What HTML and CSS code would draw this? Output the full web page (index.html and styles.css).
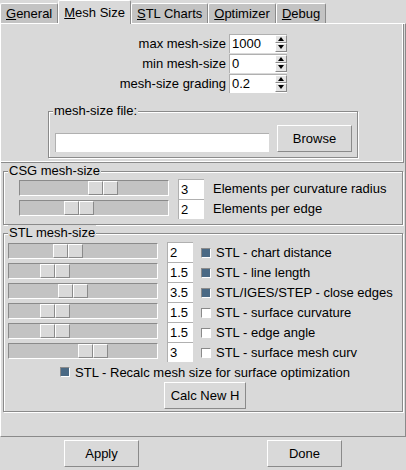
FILE: index.html
```html
<!DOCTYPE html>
<html>
<head>
<meta charset="utf-8">
<link rel="stylesheet" href="styles.css">
</head>
<body>
<div class="tabs">
  <div class="tab"><u>G</u>eneral</div>
  <div class="tab sel"><u>M</u>esh Size</div>
  <div class="tab"><u>S</u>TL Charts</div>
  <div class="tab"><u>O</u>ptimizer</div>
  <div class="tab"><u>D</u>ebug</div>
</div>
<div class="panel">
  <div class="sec-top">
    <div class="spins">
      <div class="srow"><span>max mesh-size</span><div class="spin"><span class="val">1000</span><div class="arrows"><div class="arr up"></div><div class="arr dn"></div></div></div></div>
      <div class="srow"><span>min mesh-size</span><div class="spin"><span class="val">0</span><div class="arrows"><div class="arr up"></div><div class="arr dn"></div></div></div></div>
      <div class="srow"><span>mesh-size grading</span><div class="spin"><span class="val">0.2</span><div class="arrows"><div class="arr up"></div><div class="arr dn"></div></div></div></div>
    </div>
    <div class="lf file">
      <span class="lf-title">mesh-size file:</span>
      <div class="file-row">
        <div class="entry wide"></div>
        <div class="btn browse">Browse</div>
      </div>
    </div>
  </div>
  <div class="lf csg">
    <span class="lf-title">CSG mesh-size</span>
    <div class="row">
      <div class="slider"><div class="thumb" style="margin-left:68px"><i></i><i></i></div></div>
      <div class="entry num">3</div>
      <span class="rtext">Elements per curvature radius</span>
    </div>
    <div class="row">
      <div class="slider"><div class="thumb" style="margin-left:44px"><i></i><i></i></div></div>
      <div class="entry num">2</div>
      <span class="rtext">Elements per edge</span>
    </div>
  </div>
  <div class="lf stl">
    <span class="lf-title">STL mesh-size</span>
    <div class="row">
      <div class="slider"><div class="thumb" style="margin-left:44px"><i></i><i></i></div></div>
      <div class="entry num">2</div>
      <span class="cb on"></span><span class="ctext">STL - chart distance</span>
    </div>
    <div class="row">
      <div class="slider"><div class="thumb" style="margin-left:31px"><i></i><i></i></div></div>
      <div class="entry num">1.5</div>
      <span class="cb on"></span><span class="ctext">STL - line length</span>
    </div>
    <div class="row">
      <div class="slider"><div class="thumb" style="margin-left:49px"><i></i><i></i></div></div>
      <div class="entry num">3.5</div>
      <span class="cb on"></span><span class="ctext">STL/IGES/STEP - close edges</span>
    </div>
    <div class="row">
      <div class="slider"><div class="thumb" style="margin-left:31px"><i></i><i></i></div></div>
      <div class="entry num">1.5</div>
      <span class="cb"></span><span class="ctext">STL - surface curvature</span>
    </div>
    <div class="row">
      <div class="slider"><div class="thumb" style="margin-left:31px"><i></i><i></i></div></div>
      <div class="entry num">1.5</div>
      <span class="cb"></span><span class="ctext">STL - edge angle</span>
    </div>
    <div class="row">
      <div class="slider"><div class="thumb" style="margin-left:69px"><i></i><i></i></div></div>
      <div class="entry num">3</div>
      <span class="cb"></span><span class="ctext">STL - surface mesh curv</span>
    </div>
    <div class="recalc"><span class="cb on"></span><span class="ctext">STL - Recalc mesh size for surface optimization</span></div>
    <div class="calc-row"><div class="btn calc">Calc New H</div></div>
  </div>
</div>
<div class="buttons">
  <div class="btn bottom">Apply</div>
  <div class="btn bottom">Done</div>
</div>
</body>
</html>
```
FILE: styles.css
```css
* { box-sizing: border-box; }
body {
  margin: 0;
  width: 406px;
  height: 470px;
  overflow: hidden;
  background: #d9d9d9;
  font: 13px "Liberation Sans", Arial, sans-serif;
  color: #000;
}
u { text-decoration: underline; text-underline-offset: 1px; }

.tabs { display: flex; height: 23px; align-items: flex-end; }
.tab {
  height: 20px;
  padding: 0 5px;
  background: #c3c3c3;
  border-top: 1px solid #fff;
  border-left: 1px solid #fff;
  border-right: 1px solid #8a8a8a;
  border-radius: 2px 2px 0 0;
  line-height: 19px;
  white-space: nowrap;
}
.tab.sel {
  height: 24px;
  line-height: 23px;
  background: #d9d9d9;
  margin-bottom: -1px;
  position: relative;
  z-index: 1;
}

.panel {
  height: 414px;
  border-top: 1px solid #fff;
  border-left: 1px solid #fff;
  border-right: 1px solid #8a8a8a;
  border-bottom: 1px solid #8a8a8a;
}

.sec-top {
  height: 139px;
  margin-right: 1px;
  padding-top: 9px;
  border: 1px solid #8a8a8a;
  border-top: 0;
  border-left: 0;
  box-shadow: inset -1px -1px 0 #fff;
}
.spins { width: 286px; display: flex; flex-direction: column; align-items: flex-end; }
.srow { display: flex; align-items: center; height: 20px; gap: 3px; }
.spin {
  display: flex;
  width: 58px;
  height: 19px;
  background: #fff;
  border-top: 1px solid #b0b0b0;
  border-left: 1px solid #b0b0b0;
}
.val { padding-left: 2px; line-height: 18px; }
.arrows { margin-left: auto; width: 12px; display: flex; flex-direction: column; padding: 0 0 1px 0; }
.arr {
  flex: 1;
  background: #e4e4e4;
  border: 1px solid;
  border-color: #fff #8a8a8a #8a8a8a #fff;
  display: flex;
  align-items: center;
  justify-content: center;
}
.arr::before { content: ""; border-left: 3px solid transparent; border-right: 3px solid transparent; }
.arr.up::before { border-bottom: 4px solid #000; }
.arr.dn::before { border-top: 4px solid #000; }

.lf {
  position: relative;
  border: 1px solid #8a8a8a;
  box-shadow: inset 1px 1px 0 #fff, 1px 1px 0 #fff;
}
.lf-title {
  position: absolute;
  left: 4px;
  top: -9px;
  padding: 0 1px;
  line-height: 16px;
  background: #d9d9d9;
}

.file {
  width: 310px;
  height: 47px;
  margin: 18px 0 0 47px;
  padding: 13px 5px 4px 6px;
}
.file-row { display: flex; align-items: flex-end; gap: 8px; }
.entry { background: #fff; border-top: 1px solid #b0b0b0; border-left: 1px solid #b0b0b0; }
.entry.wide { width: 214px; height: 19px; }

.btn {
  display: flex;
  align-items: center;
  justify-content: center;
  height: 27px;
  background: #d9d9d9;
  border: 1px solid;
  border-color: #fff #8a8a8a #8a8a8a #fff;
}
.browse { width: 75px; }

.csg {
  width: 400px;
  height: 54px;
  margin: 8px 0 0 2px;
  padding: 7px 0 0 15px;
}
.stl {
  width: 400px;
  height: 179px;
  margin: 8px 0 0 2px;
  padding: 8px 0 0 4px;
}
.row { display: flex; align-items: flex-start; height: 20px; }
.slider {
  width: 150px;
  height: 16px;
  margin-top: 1px;
  background: #c3c3c3;
  border: 1px solid;
  border-color: #8a8a8a #fff #fff #8a8a8a;
  display: flex;
}
.thumb { display: flex; }
.thumb i {
  width: 15px;
  height: 14px;
  background: #d9d9d9;
  border: 1px solid;
  border-color: #fff #8a8a8a #8a8a8a #fff;
}
.entry.num { width: 26px; height: 20px; margin-left: 9px; padding-left: 2px; line-height: 19px; }
.csg .entry.num { height: 20px; }
.rtext { margin-left: 9px; line-height: 20px; }
.cb {
  width: 10px;
  height: 10px;
  margin: 6px 0 0 8px;
  background: #fff;
  border: 1px solid;
  border-color: #8a8a8a #fff #fff #8a8a8a;
  flex: none;
}
.cb.on { background: #4a6984; }
.ctext { margin-left: 5px; line-height: 21px; }
.recalc { display: flex; justify-content: center; align-items: center; height: 20px; }
.recalc .cb { margin: 0; }
.calc-row { display: flex; justify-content: center; }
.calc { width: 82px; }

.buttons { display: flex; justify-content: space-around; margin-top: 3px; }
.bottom { width: 75px; }
```
